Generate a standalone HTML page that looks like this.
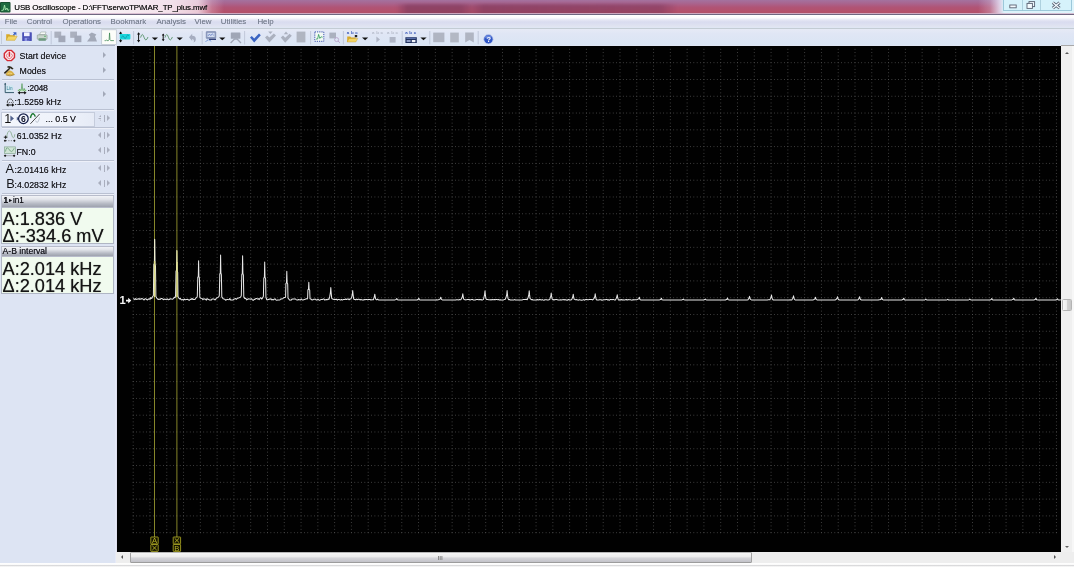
<!DOCTYPE html>
<html><head><meta charset="utf-8"><title>USB Oscilloscope</title>
<style>
html,body{margin:0;padding:0;}
body{width:1074px;height:567px;overflow:hidden;position:relative;background:#dfe6f4;font-family:"Liberation Sans",sans-serif;color:#222;}
.abs{position:absolute;}
#title{left:0;top:0;width:1074px;height:14.800px;background:linear-gradient(to bottom,#a4729f 0%,#a9658f 22%,#b05476 48%,#b4506a 78%,#aa5069 100%);}
#tglow{left:0;top:0;width:330px;height:14.400px;background:linear-gradient(to right,rgba(250,247,250,1) 0,rgba(249,242,247,.98) 110px,rgba(246,232,240,.95) 170px,rgba(244,222,232,.85) 198px,rgba(240,200,215,.3) 212px,rgba(240,200,215,0) 224px);}
#tdark{left:396px;top:4px;width:282px;height:11px;background:linear-gradient(to right,rgba(110,50,86,0),rgba(110,50,86,.5) 4%,rgba(110,50,86,.5) 23%,rgba(110,50,86,.2) 27%,rgba(110,50,86,.5) 31%,rgba(110,50,86,.42) 94%,rgba(110,50,86,0));filter:blur(1.600px);}
#ttext{text-shadow:0 0 .6px rgba(20,20,20,.8);left:14.3px;top:3.1px;letter-spacing:-.1px;font-size:7.9px;line-height:10px;color:#1a1a1a;white-space:nowrap;}
#tline{left:0;top:12.500px;width:1074px;height:2.600px;background:linear-gradient(to bottom,rgba(214,180,204,0) 0,rgba(214,184,206,.85) 25%,rgba(206,176,200,.9) 45%,#726a84 58%,#6e6680 88%,#b4b0c0 100%);}
#wbtn{left:1003px;top:0;width:69px;height:11.3px;background:#d6f2fb;border:0.6px solid #9cc8da;border-top:none;box-sizing:border-box;}
#menu{left:0;top:15.200px;width:1074px;height:12.300px;background:linear-gradient(to bottom,#ffffff 0,#fcfcfe 22%,#e4e6f4 42%,#d9dcef 58%,#dcdff0 75%,#e1e5f1 100%);}
.mi{text-shadow:0 0 .6px rgba(114,122,138,.45);position:absolute;top:16.6px;font-size:7.9px;line-height:10px;color:#727a8a;white-space:nowrap;}
#tool{left:0;top:27.5px;width:1074px;height:17.6px;background:linear-gradient(to bottom,#e6eaf6 0,#e0e6f5 30%,#dae5f4 100%);border-top:0.8px solid #c3ccd4;box-sizing:border-box;}
#panel{left:0;top:45.1px;width:116.2px;height:522px;background:#dde4f3;}
.sep{position:absolute;left:1.5px;width:112px;height:0.8px;background:#bac1d2;box-shadow:0 .8px 0 #f0f3fa;}
.pt{text-shadow:0 0 .6px rgba(20,20,30,.75);position:absolute;font-size:8.8px;line-height:10px;white-space:nowrap;color:#1e1e22;}
.big{text-shadow:0 0 .8px rgba(20,20,20,.7);position:absolute;font-size:18.2px;line-height:18px;white-space:nowrap;color:#151515;left:2.5px;}
.hdr{position:absolute;left:1.2px;width:112.600px;background:linear-gradient(to bottom,#f2f3f7 0,#e2e4ea 30%,#b6bac4 70%,#9ea2ae 100%);font-size:8.6px;line-height:10px;color:#20222a;box-sizing:border-box;border:0.5px solid #b8bccb;}
.box{position:absolute;left:1.2px;width:112.600px;background:#f1fbef;border:0.6px solid #b0b6c4;border-top:none;box-sizing:border-box;}
.arr{position:absolute;width:0;height:0;border-top:3px solid transparent;border-bottom:3px solid transparent;border-left:3.8px solid #a2a8b8;margin-top:-.4px}
.arl{position:absolute;width:0;height:0;border-top:3px solid transparent;border-bottom:3px solid transparent;border-right:3.8px solid #b4bacb;margin-top:-.4px;margin-left:-.4px}
.ar2{position:absolute;width:0;height:0;border-top:3.800px solid transparent;border-bottom:3.800px solid transparent;border-left:3.900px solid #a9aebd;}
.al2{position:absolute;width:0;height:0;border-top:3.800px solid transparent;border-bottom:3.800px solid transparent;border-right:3.900px solid #a9aebd;}
#scope{left:116.500px;top:45.700px;width:944.300px;height:506px;background:#000;overflow:hidden;}
#vs{left:1060.8px;top:45.300px;width:13.2px;height:506.400px;background:#f0f0f0;border-top:.8px solid #a8a8a8;box-sizing:border-box}
#hs{left:116.4px;top:551.7px;width:957.6px;height:12.2px;background:#eeeeee;}
#bot{left:0;top:563.200px;width:1074px;height:3.800px;background:linear-gradient(to bottom,#ffffff 0,#fafafa 40%,#bcbcc0 46%,#bcbcc0 58%,#f2f2f2 66%,#f4f4f4 100%);}
</style></head><body><div id="wrap" style="position:absolute;left:0;top:0;width:1074px;height:567px;will-change:transform;opacity:.999">
<div id="title" class="abs" style="overflow:hidden"><div id="tdark" class="abs"></div></div>
<div id="tglow" class="abs"></div>
<svg class="abs" style="left:0px;top:1.800px" width="11" height="12" viewBox="0 0 11 12"><rect x="0" y="0" width="10.5" height="10.600" rx="1" fill="#17492c"/><rect x="0.8" y="0.8" width="8.9" height="9" fill="#1f6a40"/><path d="M1.5 8.5 L3.5 8 L4.5 3 L5.5 8 L7 6 L8 8.5 L9.3 7.5" fill="none" stroke="#9fe0a8" stroke-width="1"/></svg>
<div id="ttext" class="abs">USB Oscilloscope - D:\FFT\serwoTP\MAR_TP_plus.mwf</div>
<div class="abs" style="left:960px;top:0;width:114px;height:14.100px;background:linear-gradient(to right,rgba(226,210,232,0) 0,rgba(226,210,232,.0) 18px,rgba(226,210,232,.3) 30px,rgba(228,220,240,.85) 39px,#dcf2fa 44px,#def4fb 100%)"></div><div id="wbtn" class="abs"></div>
<svg class="abs" style="left:1003px;top:0" width="70" height="12" viewBox="0 0 70 12">
<line x1="19.5" y1="0" x2="19.5" y2="11" stroke="#9cc3d3" stroke-width=".7"/><line x1="37.5" y1="0" x2="37.5" y2="11" stroke="#9cc3d3" stroke-width=".7"/>
<rect x="6.8" y="5" width="6.4" height="2.8" fill="#f4fbff" stroke="#5a6272" stroke-width=".9"/>
<rect x="26" y="1.6" width="5.6" height="5" fill="#eef8fc" stroke="#5a6272" stroke-width=".9"/><rect x="24" y="3.4" width="5.4" height="5" fill="#f4fbff" stroke="#5a6272" stroke-width=".9"/>
<path d="M49.800 2.600 L56.600 8.200 M56.600 2.600 L49.800 8.200" stroke="#525a6c" stroke-width="3" fill="none"/><path d="M49.800 2.600 L56.600 8.200 M56.600 2.600 L49.800 8.200" stroke="#f4fbff" stroke-width="1.300" fill="none"/>
</svg>
<div id="tline" class="abs"></div>
<div id="menu" class="abs"></div>
<div class="mi" style="left:4.7px">File</div>
<div class="mi" style="left:26.7px">Control</div>
<div class="mi" style="left:62.4px">Operations</div>
<div class="mi" style="left:110.6px">Bookmark</div>
<div class="mi" style="left:156.6px">Analysis</div>
<div class="mi" style="left:194.6px">View</div>
<div class="mi" style="left:220.8px">Utilities</div>
<div class="mi" style="left:257.4px">Help</div>
<div id="tool" class="abs"></div>
<svg class="abs" style="left:0;top:27.7px" width="500" height="18" viewBox="0 27 500 18">
<!-- grip -->
<line x1="1.4" y1="30" x2="1.4" y2="43" stroke="#b9c0d2" stroke-width=".8"/>
<!-- open -->
<path d="M6.2 33.2 h3.2 l1 1 h4.6 v5 h-8.8z" fill="#d9a928"/><path d="M6.2 39.2 l2-4 h9 l-2.2 4z" fill="#f3d566" stroke="#c39a24" stroke-width=".4"/><path d="M13 31.2 l3.4 0 0 3.2 -1.2-1.1 -1.4 1.3 -.9-.9 1.3-1.3z" fill="#3b62c4"/>
<!-- save -->
<rect x="22.2" y="31.2" width="9.6" height="8.800" rx=".6" fill="#4a50b6"/><rect x="24" y="31.400" width="5.600" height="3.800" fill="#f2f2ff"/><rect x="24.6" y="36.8" width="4.6" height="3.2" fill="#8f97e6"/><rect x="27.4" y="37.3" width="1.2" height="2.3" fill="#2a3496"/>
<!-- print -->
<path d="M39.5 33.6 l1.4-2.6 h5.2 l-1 2.6z" fill="#f8faf8" stroke="#8a9a90" stroke-width=".5"/><rect x="37.3" y="33.8" width="9.8" height="4.6" rx=".8" fill="#c9d4cc" stroke="#76867c" stroke-width=".5"/><rect x="38.6" y="37.2" width="7.2" height="2.6" fill="#6f9a80"/><rect x="44.2" y="34.8" width="1.6" height="1" fill="#49b35e"/>
<line x1="51.2" y1="30" x2="51.2" y2="43.4" stroke="#b9c0d2" stroke-width=".8"/>
<!-- disabled copy icons -->
<g fill="#abb0be"><rect x="54.400" y="30.600" width="6.800" height="6.200"/><rect x="58.400" y="34.600" width="7" height="6.600" fill="#a2a8b8"/>
<rect x="70.200" y="30.600" width="6.800" height="6.200"/><rect x="74.400" y="34.600" width="7" height="6.600" fill="#a2a8b8"/>
<path d="M87 40.4 l3.4-4.4 -1.6-2.6 3-2 4.6 2.2 -1.4 1.6 2 5.2z" fill="#a3a9b8"/></g>
<!-- active fft button -->
<rect x="101.700" y="28.800" width="14.600" height="14.700" fill="#fcfdf9" stroke="#b9c0cc" stroke-width=".7"/><path d="M104.600 39.600 h1.200 l.6-.5 .6.500 h1.400 l.7-.7 .45-7 .45 7 .7.700 h3.200" fill="none" stroke="#3a8650" stroke-width=".75"/>
<!-- cyan icon -->
<path d="M120.600 31.400 v9.200" stroke="#111" stroke-width="1"/><path d="M118.900 32.800 l1.700-2.300 1.700 2.300z M118.900 39.200 l1.700 2.300 1.700-2.300z" fill="#111"/><rect x="119.800" y="32.900" width="10.600" height="5.500" rx=".8" fill="#19d6dc"/><path d="M121.600 36.800 q1.200-3.600 2.400-.6 t2.400-.4 2.400-.8" fill="none" stroke="#0f8fa8" stroke-width=".7"/>
<line x1="133.6" y1="30" x2="133.6" y2="43.4" stroke="#b9c0d2" stroke-width=".8"/>
<!-- vert scale icons -->
<path d="M138.6 32 v8.6" stroke="#111" stroke-width="1"/><path d="M137 33.6 l1.6-2.4 1.6 2.4z M137 39 l1.6 2.4 1.6-2.4z" fill="#111"/><path d="M140.6 36.6 q1.6-6 3.4-.4 t4 -.2" fill="none" stroke="#4a8a5c" stroke-width=".8"/>
<path d="M151.8 36.4 h6.2 l-3.1 2.9z" fill="#111"/>
<path d="M163.2 33.4 v6" stroke="#111" stroke-width="1"/><path d="M161.8 34.6 l1.4-2 1.4 2z M161.8 38.2 l1.4 2 1.4-2z" fill="#111"/><path d="M165 36.6 q1.6-6 3.4-.4 t4 -.2" fill="none" stroke="#4a8a5c" stroke-width=".8"/>
<path d="M176.6 36.4 h6.2 l-3.1 2.9z" fill="#111"/>
<!-- undo -->
<path d="M189 36.2 l3.2-3.4 v2 q4 0 3.6 4.2 q-.4 2-2.4 2.6 q1.6-2.6-1.2-3.6 v2z" fill="#a6adc0"/>
<line x1="202.2" y1="30" x2="202.2" y2="43.4" stroke="#b9c0d2" stroke-width=".8"/>
<!-- monitor -->
<rect x="206.200" y="30.600" width="9.600" height="6.800" rx=".5" fill="#8a98bc" stroke="#6a7aa4" stroke-width=".5"/><rect x="207.400" y="31.800" width="7.200" height="4.200" fill="#d2dcf0"/><path d="M208 35 l1.400-2 1.400 1.600 1.400-1.800 1.600 1.600" fill="none" stroke="#4a66b8" stroke-width=".6"/><rect x="209" y="37.800" width="7" height="1.100" fill="#22306c"/><path d="M205.600 40.800 q2.600-3.400 5.600-.4" fill="none" stroke="#4a78d0" stroke-width="1" stroke-dasharray="1.100 .7"/>
<path d="M219.2 36.4 h6.2 l-3.1 2.9z" fill="#111"/>
<rect x="230.8" y="31.4" width="9.6" height="6.4" rx=".6" fill="#a0a6b6"/><path d="M230.6 42 l4-4 h2.4 l4 4" fill="none" stroke="#a0a6b6" stroke-width="1.3"/>
<line x1="244.6" y1="30" x2="244.6" y2="43.4" stroke="#b9c0d2" stroke-width=".8"/>
<!-- checks -->
<path d="M250 36.6 l1.8-1.6 2.4 2.6 4.8-5 1.8 1.6 -6.6 7.4z" fill="#3a63c2"/>
<path d="M265 36.400 l2.200-2 2.200 2.200 4.400-4 2.200 2 -6.600 7z" fill="#abb1bf"/><path d="M268.200 30.600 h4.400 l-2.200 2.400z" fill="#abb1bf"/>
<path d="M280.800 36.600 l2.200-2 2.200 2.200 4.400-4 2.200 2 -6.600 7z" fill="#abb1bf"/><path d="M283.800 33.200 l2.200-2.600 2.200 2.600z" fill="#abb1bf"/>
<rect x="296.600" y="30.600" width="8.800" height="10.800" fill="#b0b5c1"/>
<line x1="310.6" y1="30" x2="310.6" y2="43.4" stroke="#b9c0d2" stroke-width=".8"/>
<!-- select -->
<rect x="314.800" y="30.900" width="9" height="9.400" fill="#f2f8f4" stroke="#2c44a8" stroke-width=".9" stroke-dasharray="1.200 1"/><path d="M316 38 h1.600 l1-4.600 1.200 4 1.200-1.600 1.600 .4" fill="none" stroke="#2f9a58" stroke-width=".8"/>
<rect x="329.4" y="31.6" width="6.6" height="5.8" fill="#abb1bf"/><circle cx="336.6" cy="38.6" r="2" fill="none" stroke="#b9a6cc" stroke-width=".9"/><path d="M338 40 l2 1.8" stroke="#b9a6cc" stroke-width="1"/>
<!-- folder abc -->
<line x1="343.400" y1="30" x2="343.400" y2="43.400" stroke="#b9c0d2" stroke-width=".8"/>
<path d="M347.200 35.600 h3 l1 1 h4.400 v4.400 h-8.400z" fill="#d9a928"/><path d="M347.200 41 l1.800-3.600 h8.800 l-2 3.600z" fill="#f3d566" stroke="#c39a24" stroke-width=".4"/><text x="346.800" y="33.200" font-size="4.400" font-family="Liberation Sans, sans-serif" font-weight="bold" fill="#3555b8" letter-spacing="1.700">abc</text><rect x="354.800" y="34" width="2.400" height="2.200" fill="#222"/>
<path d="M362 36.4 h6.2 l-3.1 2.9z" fill="#111"/>
<text x="372" y="33.200" font-size="4.400" font-family="Liberation Sans, sans-serif" font-weight="bold" fill="#b4bac8" letter-spacing="1.700">abc</text><path d="M376.4 35.6 v6 l3.6-3z" fill="#b0b6c6"/>
<text x="387" y="33.200" font-size="4.400" font-family="Liberation Sans, sans-serif" font-weight="bold" fill="#b4bac8" letter-spacing="1.700">abc</text><rect x="389.6" y="36" width="6" height="5.6" fill="#b0b6c6"/>
<line x1="402.2" y1="30" x2="402.2" y2="43.4" stroke="#b9c0d2" stroke-width=".8"/>
<text x="405.200" y="33.400" font-size="4.400" font-family="Liberation Sans, sans-serif" font-weight="bold" fill="#3555b8" letter-spacing="1.700">abc</text><rect x="405.4" y="36.2" width="11.4" height="5.8" fill="#1f2f5c"/><rect x="406.4" y="36.8" width="9.4" height=".9" fill="#6f86c8"/><rect x="411.8" y="39" width="3.6" height="2.2" fill="#f2f4fa"/><rect x="406.6" y="39" width="4" height="2" fill="#8f9cc4"/>
<path d="M420.4 36.4 h6.2 l-3.1 2.9z" fill="#111"/>
<line x1="429.8" y1="30" x2="429.8" y2="43.4" stroke="#b9c0d2" stroke-width=".8"/>
<rect x="433.2" y="31.6" width="11.2" height="9.6" fill="#b0b5c2"/><rect x="450.2" y="31.6" width="8.6" height="9.8" fill="#b3b8c4"/><path d="M465.2 31.6 h8.6 v10 l-4.3-2.6 -4.3 2.6z" fill="#b0b5c2"/>
<line x1="478.2" y1="30" x2="478.2" y2="43.4" stroke="#b9c0d2" stroke-width=".8"/>
<!-- help -->
<circle cx="488.4" cy="38.2" r="4.7" fill="#2f55c6" stroke="#c9d3ee" stroke-width=".8"/><ellipse cx="488.2" cy="36" rx="3.2" ry="1.8" fill="#7f9be6" opacity=".7"/><text x="486.4" y="41" font-size="7.4" font-weight="bold" font-family="Liberation Sans, sans-serif" fill="#fff">?</text>
</svg>
<div id="panel" class="abs"></div><div class="abs" style="left:0;top:44.500px;width:116.300px;height:.8px;background:#aab2c4"></div>
<svg class="abs" style="left:3.300px;top:48.800px" width="13.200" height="13.200" viewBox="0 0 14 14"><path d="M4.600 1.500 h4.400 l3.200 3.200 v4.400 l-3.200 3.200 h-4.400 l-3.200-3.200 v-4.400z" fill="#fbe9ec" stroke="#d42a34" stroke-width="1.500" stroke-linejoin="round"/><path d="M4.900 4.800 a3 3 0 1 0 3.800 0" fill="none" stroke="#e0606a" stroke-width=".9"/><rect x="6" y="2.800" width="1.600" height="5.400" fill="#d42a34"/></svg>
<div class="pt" style="left:19.6px;top:50.65px;">Start device</div>
<div class="arr" style="left:102.6px;top:52.6px"></div>
<svg class="abs" style="left:3px;top:64px" width="14" height="13" viewBox="0 0 14 13"><path d="M2.600 10.400 q.6-3 3.600-4.200 q3.400.4 5.400 4.200 q-4.400 2.600-9 0z" fill="#d8b048"/><path d="M4.400 10 q2.400-1.600 4.600-.4" fill="none" stroke="#f4dc84" stroke-width=".8"/><path d="M1.400 9.400 l5.400-5.200" stroke="#2a2418" stroke-width="1.500"/><path d="M4.200 2.400 q3.600-1.200 6.400 2.400 l-1.400.8 q-2.200-2.400-4.600-1.800z" fill="#2e2a1c"/><path d="M2.800 11 q4.400 2 8.800-.4" fill="none" stroke="#8a6a20" stroke-width=".6"/></svg>
<div class="pt" style="left:19.6px;top:65.95px;">Modes</div>
<div class="arr" style="left:102.6px;top:67.6px"></div>
<div class="sep" style="top:79px"></div>
<svg class="abs" style="left:4px;top:82px" width="24" height="13" viewBox="0 0 24 13"><rect x="1.600" y="3" width="7.600" height="7.200" fill="#d4e8f2"/><path d="M1.200 1.400 v9.200 h8.800" fill="none" stroke="#234a5c" stroke-width=".9"/><path d="M.2 2.600 l1-1.800 1 1.800z" fill="#234a5c"/><text x="2.400" y="8.400" font-size="4.600" fill="#2f7f96" font-family="Liberation Sans, sans-serif">Lin</text><rect x="14" y="7.400" width="8.400" height="2" fill="#c9efc4"/><path d="M13.800 8.400 h1.400 l.6-1.400 .6 1.400 h.8 l.8-6.800 .8 6.800 h.8 l.6-2 .6 2 h1.400" fill="none" stroke="#5fa266" stroke-width=".8"/><path d="M15 10.700 h6.200" stroke="#111" stroke-width="1"/><path d="M13.600 10.700 l2.400-1.700 v3.400z M22.600 10.700 l-2.400-1.700 v3.400z" fill="#111"/></svg>
<div class="pt" style="left:27.200px;top:83.15px;letter-spacing:-.3px">:2048</div>
<svg class="abs" style="left:5px;top:96px" width="11" height="11" viewBox="0 0 11 11"><path d="M2.400 5.800 q.6-2.800 2.800-2.800 t2.800 2.800" fill="none" stroke="#1c1c1c" stroke-width=".9" stroke-dasharray="1.600 .6"/><path d="M1.800 6.600 h7" stroke="#333" stroke-width=".7" stroke-dasharray="1.200 .8"/><path d="M2.400 9 h5.600" stroke="#111" stroke-width="1"/><path d="M1 9 l2.400-1.700 v3.400z M9.400 9 l-2.400-1.700 v3.400z" fill="#111"/></svg>
<div class="pt" style="left:14.4px;top:96.65px;">:1.5259 kHz</div>
<div class="arr" style="left:102.6px;top:91.2px"></div>
<div class="sep" style="top:109.4px"></div>
<div class="abs" style="left:1.2px;top:111.900px;width:94px;height:14.700px;background:linear-gradient(to right,#f3f6fc 0,#eef2fa 70%,#e6ebf6 100%);border:0.6px solid #c5ccdc;box-sizing:border-box"></div>
<div class="abs" style="left:4.300px;top:112.600px;font-size:12.600px;line-height:12px;color:#111">1</div>
<svg class="abs" style="left:10px;top:112px" width="32" height="13" viewBox="0 0 32 13"><path d="M.400 3.600 l3.600 3 -3.600 3z" fill="#51618c"/><path d="M6.800 4.800 l2.600 1.900 -2.600 1.900z" fill="#51618c"/><circle cx="13.400" cy="6.700" r="4.800" fill="#f4f7ff" stroke="#141e48" stroke-width="1.250"/><text x="11" y="9.800" font-size="8.600" font-weight="bold" fill="#0c1024" font-family="Liberation Sans, sans-serif">6</text><path d="M20.400 6 q1.200-5.200 3.200-4 q1.200.8 1.600 2.600" fill="none" stroke="#1f7a34" stroke-width="1.500"/><path d="M20.400 11.800 l9.200-9.800" stroke="#222" stroke-width=".8"/><path d="M25.600 8.600 q1.400 3.600 2.800 .4 t1-3.600" fill="none" stroke="#aab4c0" stroke-width=".7"/></svg>
<div class="pt" style="left:45.6px;top:113.85px;">... 0.5 V</div>
<div class="al2" style="left:98.200px;top:114.800px"></div><div class="abs" style="left:97.600px;top:116.800px;width:5px;height:.7px;background:#e0e6f4;box-shadow:0 2.200px 0 #e0e6f4"></div>
<div class="abs" style="left:103.800px;top:114.5px;width:.9px;height:7.400px;background:#a9aebd"></div><div class="ar2" style="left:106.500px;top:114.800px"></div>
<div class="sep" style="top:127.3px"></div>
<svg class="abs" style="left:3px;top:130px" width="14" height="13" viewBox="0 0 14 13"><path d="M3.600 7.800 q.8-6.800 2.800-6.800 q1.600 0 2.400 4 q.6 2.800 1.600 2.800 q1 0 1.400-3.600" fill="none" stroke="#8fb096" stroke-width=".9"/><path d="M.8 7.200 h3.600 M2.600 5.600 v3.200" stroke="#111" stroke-width=".9"/><path d="M3 10.700 h7.600" stroke="#555" stroke-width=".8" stroke-dasharray="1 1.400"/><path d="M.8 10.700 l1.200-1.200 1.200 1.200 -1.200 1.200z M10.200 10.700 l1.200-1.200 1.200 1.200 -1.200 1.200z" fill="#111"/></svg>
<div class="pt" style="left:16.8px;top:131.25px;">61.0352 Hz</div>
<div class="al2" style="left:98.200px;top:131.8px"></div><div class="abs" style="left:103.800px;top:131.5px;width:.9px;height:7.400px;background:#a9aebd"></div><div class="ar2" style="left:106.500px;top:131.8px"></div>
<svg class="abs" style="left:3px;top:145.6px" width="14" height="13" viewBox="0 0 14 13"><rect x="1.400" y=".9" width="11" height="6.600" fill="#cfe4d6" stroke="#86a894" stroke-width=".7"/><path d="M2.400 5.600 q1.200-5.800 3.200-2.800 t3 2.800 2.600-3.400" fill="none" stroke="#76a684" stroke-width=".9"/><path d="M3 9.700 h8" stroke="#777" stroke-width=".5"/><path d="M.8 9.700 l1.300-1.300 1.300 1.300 -1.300 1.300z M9.800 9.700 l1.300-1.300 1.300 1.300 -1.300 1.300z" fill="#111"/></svg>
<div class="pt" style="left:16.5px;top:146.65px;">FN:0</div>
<div class="al2" style="left:98.200px;top:147.4px"></div><div class="abs" style="left:103.800px;top:147.1px;width:.9px;height:7.400px;background:#a9aebd"></div><div class="ar2" style="left:106.500px;top:147.4px"></div>
<div class="sep" style="top:160.2px"></div>
<div class="abs" style="left:5.4px;top:162.70px;font-size:12.8px;line-height:12px;color:#15161a">A</div>
<div class="pt" style="left:14.5px;top:165.05px;">:2.01416 kHz</div>
<div class="al2" style="left:98.200px;top:164.8px"></div><div class="abs" style="left:103.800px;top:164.5px;width:.9px;height:7.400px;background:#a9aebd"></div><div class="ar2" style="left:106.500px;top:164.8px"></div>
<div class="abs" style="left:6.2px;top:177.90px;font-size:12.8px;line-height:12px;color:#15161a">B</div>
<div class="pt" style="left:14.5px;top:180.25px;">:4.02832 kHz</div>
<div class="al2" style="left:98.200px;top:180.0px"></div><div class="abs" style="left:103.800px;top:179.7px;width:.9px;height:7.400px;background:#a9aebd"></div><div class="ar2" style="left:106.500px;top:180.0px"></div>
<div class="sep" style="top:193.2px"></div>
<div class="hdr" style="top:195.4px;height:12.2px"></div>
<div class="pt" style="left:3.400px;top:196.30px;font-size:8.2px;color:#15161c"><b>1</b><span style="font-size:5px;position:relative;top:-1px">&#9658;</span>in1</div>
<div class="box" style="top:207.6px;height:36.8px"></div>
<div class="big" style="top:210.00px">A:1.836 V</div>
<div class="big" style="top:226.80px">&Delta;:-334.6 mV</div>
<div class="hdr" style="top:245.8px;height:10.9px"></div>
<div class="pt" style="left:2.6px;top:245.75px;font-size:8.6px;color:#15161c">A-B interval</div>
<div class="box" style="top:256.7px;height:37px"></div>
<div class="big" style="top:259.80px">A:2.014 kHz</div>
<div class="big" style="top:276.70px">&Delta;:2.014 kHz</div>
<div class="abs" style="left:114.500px;top:45.100px;width:2px;height:518.100px;background:linear-gradient(to right,#dfe5f4 0,#eaecf9 40%,#e6e8f7 70%,#b4bbcc 100%)"></div>
<div id="scope" class="abs">
<svg width="945" height="507" viewBox="0 0 945 507" style="position:absolute;left:-0.500px;top:-0.700px">
<g stroke="#585858" stroke-width="0.84" stroke-dasharray="0.840 2.517" fill="none">
<line x1="16.78" y1="17.69" x2="940.93" y2="17.69"/>
<line x1="16.78" y1="34.47" x2="940.93" y2="34.47"/>
<line x1="16.78" y1="51.26" x2="940.93" y2="51.26"/>
<line x1="16.78" y1="68.04" x2="940.93" y2="68.04"/>
<line x1="16.78" y1="84.83" x2="940.93" y2="84.83"/>
<line x1="16.78" y1="101.62" x2="940.93" y2="101.62"/>
<line x1="16.78" y1="118.40" x2="940.93" y2="118.40"/>
<line x1="16.78" y1="135.19" x2="940.93" y2="135.19"/>
<line x1="16.78" y1="151.97" x2="940.93" y2="151.97"/>
<line x1="16.78" y1="168.76" x2="940.93" y2="168.76"/>
<line x1="16.78" y1="185.55" x2="940.93" y2="185.55"/>
<line x1="16.78" y1="202.33" x2="940.93" y2="202.33"/>
<line x1="16.78" y1="219.12" x2="940.93" y2="219.12"/>
<line x1="16.78" y1="235.90" x2="940.93" y2="235.90"/>
<line x1="16.78" y1="252.69" x2="940.93" y2="252.69"/>
<line x1="16.78" y1="269.48" x2="940.93" y2="269.48"/>
<line x1="16.78" y1="286.26" x2="940.93" y2="286.26"/>
<line x1="16.78" y1="303.05" x2="940.93" y2="303.05"/>
<line x1="16.78" y1="319.83" x2="940.93" y2="319.83"/>
<line x1="16.78" y1="336.62" x2="940.93" y2="336.62"/>
<line x1="16.78" y1="353.41" x2="940.93" y2="353.41"/>
<line x1="16.78" y1="370.19" x2="940.93" y2="370.19"/>
<line x1="16.78" y1="386.98" x2="940.93" y2="386.98"/>
<line x1="16.78" y1="403.76" x2="940.93" y2="403.76"/>
<line x1="16.78" y1="420.55" x2="940.93" y2="420.55"/>
<line x1="16.78" y1="437.34" x2="940.93" y2="437.34"/>
<line x1="16.78" y1="454.12" x2="940.93" y2="454.12"/>
<line x1="16.78" y1="470.91" x2="940.93" y2="470.91"/>
<line x1="16.78" y1="487.69" x2="940.93" y2="487.69"/>
<line x1="17.20" y1="3.84" x2="17.20" y2="488.19"/>
<line x1="33.99" y1="3.84" x2="33.99" y2="488.19"/>
<line x1="50.77" y1="3.84" x2="50.77" y2="488.19"/>
<line x1="67.56" y1="3.84" x2="67.56" y2="488.19"/>
<line x1="84.34" y1="3.84" x2="84.34" y2="488.19"/>
<line x1="101.13" y1="3.84" x2="101.13" y2="488.19"/>
<line x1="117.92" y1="3.84" x2="117.92" y2="488.19"/>
<line x1="134.70" y1="3.84" x2="134.70" y2="488.19"/>
<line x1="151.49" y1="3.84" x2="151.49" y2="488.19"/>
<line x1="168.27" y1="3.84" x2="168.27" y2="488.19"/>
<line x1="185.06" y1="3.84" x2="185.06" y2="488.19"/>
<line x1="201.85" y1="3.84" x2="201.85" y2="488.19"/>
<line x1="218.63" y1="3.84" x2="218.63" y2="488.19"/>
<line x1="235.42" y1="3.84" x2="235.42" y2="488.19"/>
<line x1="252.20" y1="3.84" x2="252.20" y2="488.19"/>
<line x1="268.99" y1="3.84" x2="268.99" y2="488.19"/>
<line x1="285.78" y1="3.84" x2="285.78" y2="488.19"/>
<line x1="302.56" y1="3.84" x2="302.56" y2="488.19"/>
<line x1="319.35" y1="3.84" x2="319.35" y2="488.19"/>
<line x1="336.13" y1="3.84" x2="336.13" y2="488.19"/>
<line x1="352.92" y1="3.84" x2="352.92" y2="488.19"/>
<line x1="369.71" y1="3.84" x2="369.71" y2="488.19"/>
<line x1="386.49" y1="3.84" x2="386.49" y2="488.19"/>
<line x1="403.28" y1="3.84" x2="403.28" y2="488.19"/>
<line x1="420.06" y1="3.84" x2="420.06" y2="488.19"/>
<line x1="436.85" y1="3.84" x2="436.85" y2="488.19"/>
<line x1="453.64" y1="3.84" x2="453.64" y2="488.19"/>
<line x1="470.42" y1="3.84" x2="470.42" y2="488.19"/>
<line x1="487.21" y1="3.84" x2="487.21" y2="488.19"/>
<line x1="503.99" y1="3.84" x2="503.99" y2="488.19"/>
<line x1="520.78" y1="3.84" x2="520.78" y2="488.19"/>
<line x1="537.57" y1="3.84" x2="537.57" y2="488.19"/>
<line x1="554.35" y1="3.84" x2="554.35" y2="488.19"/>
<line x1="571.14" y1="3.84" x2="571.14" y2="488.19"/>
<line x1="587.92" y1="3.84" x2="587.92" y2="488.19"/>
<line x1="604.71" y1="3.84" x2="604.71" y2="488.19"/>
<line x1="621.50" y1="3.84" x2="621.50" y2="488.19"/>
<line x1="638.28" y1="3.84" x2="638.28" y2="488.19"/>
<line x1="655.07" y1="3.84" x2="655.07" y2="488.19"/>
<line x1="671.85" y1="3.84" x2="671.85" y2="488.19"/>
<line x1="688.64" y1="3.84" x2="688.64" y2="488.19"/>
<line x1="705.43" y1="3.84" x2="705.43" y2="488.19"/>
<line x1="722.21" y1="3.84" x2="722.21" y2="488.19"/>
<line x1="739.00" y1="3.84" x2="739.00" y2="488.19"/>
<line x1="755.78" y1="3.84" x2="755.78" y2="488.19"/>
<line x1="772.57" y1="3.84" x2="772.57" y2="488.19"/>
<line x1="789.36" y1="3.84" x2="789.36" y2="488.19"/>
<line x1="806.14" y1="3.84" x2="806.14" y2="488.19"/>
<line x1="822.93" y1="3.84" x2="822.93" y2="488.19"/>
<line x1="839.71" y1="3.84" x2="839.71" y2="488.19"/>
<line x1="856.50" y1="3.84" x2="856.50" y2="488.19"/>
<line x1="873.29" y1="3.84" x2="873.29" y2="488.19"/>
<line x1="890.07" y1="3.84" x2="890.07" y2="488.19"/>
<line x1="906.86" y1="3.84" x2="906.86" y2="488.19"/>
<line x1="923.64" y1="3.84" x2="923.64" y2="488.19"/>
<line x1="940.43" y1="3.84" x2="940.43" y2="488.19"/>
</g>
<line x1="38.5" y1="0" x2="38.5" y2="492.0" stroke="#86862a" stroke-width="1"/>
<line x1="60.9" y1="0" x2="60.9" y2="492.0" stroke="#86862a" stroke-width="1"/>
<polyline points="17.2,254.1 18.0,253.8 18.9,254.7 19.7,253.6 20.6,254.5 21.4,254.2 22.2,253.6 23.1,254.4 23.9,253.6 24.8,254.3 25.6,253.6 26.4,253.7 27.3,254.3 28.1,255.0 29.0,253.7 29.8,253.8 30.6,254.5 31.5,255.0 32.3,254.2 33.2,253.7 34.0,254.5 34.8,252.5 35.7,253.5 36.5,251.8 37.4,250.5 37.4,249.8 37.8,219.7 38.4,218.5 38.7,194.2 39.0,218.5 39.5,221.0 39.9,251.6 40.7,253.0 41.6,254.1 42.4,254.4 43.2,254.1 44.1,254.5 44.9,253.6 45.8,253.6 46.6,253.9 47.4,254.7 48.3,254.3 49.1,254.1 50.0,254.6 50.8,254.3 51.6,254.0 52.5,254.8 53.3,254.6 54.2,253.7 55.0,254.1 55.8,253.9 56.7,254.2 57.5,253.6 58.4,252.2 59.2,252.6 59.6,250.1 60.0,226.3 60.5,225.3 60.8,205.5 61.1,225.3 61.7,227.3 62.0,251.6 62.6,252.8 63.4,253.9 64.2,253.3 65.1,254.6 65.9,254.9 66.8,254.5 67.6,255.1 68.4,254.1 69.3,254.8 70.1,254.6 71.0,254.5 71.8,254.3 72.6,255.0 73.5,255.2 74.3,254.3 75.2,254.5 76.0,253.4 76.8,254.4 77.7,254.2 78.5,254.6 79.4,254.0 80.2,252.6 81.0,252.1 81.3,251.1 81.8,232.3 82.3,231.5 82.6,215.8 82.9,231.5 83.4,233.0 83.8,252.3 84.4,253.1 85.2,253.3 86.1,253.4 86.9,254.8 87.8,253.7 88.6,253.9 89.4,254.2 90.3,255.1 91.1,253.6 92.0,254.3 92.8,254.5 93.6,255.1 94.5,255.0 95.3,255.1 96.2,253.9 97.0,254.1 97.8,253.9 98.7,254.8 99.5,254.7 100.4,253.1 101.2,252.8 102.0,252.4 102.9,251.7 103.3,250.5 103.8,228.9 104.3,228.0 104.6,210.0 104.9,228.0 105.4,229.8 105.8,251.9 107.1,253.8 107.9,253.9 108.8,254.4 109.6,255.2 110.4,254.7 111.3,254.4 112.1,254.6 113.0,254.7 113.8,253.6 114.6,255.1 115.5,254.9 116.3,255.1 117.2,254.9 118.0,254.1 118.8,254.1 119.7,253.5 120.5,254.3 121.4,253.2 122.2,253.0 123.0,252.9 123.9,252.4 124.7,252.0 125.3,250.6 125.8,229.4 126.3,228.5 126.6,210.8 126.9,228.5 127.4,230.2 127.8,251.9 128.9,253.6 129.8,253.3 130.6,254.9 131.4,254.5 132.3,253.8 133.1,254.0 134.0,254.1 134.8,254.2 135.6,253.7 136.5,255.0 137.3,255.3 138.2,254.3 139.0,254.4 139.8,253.6 140.7,253.6 141.5,254.0 142.4,253.7 143.2,254.6 144.0,253.3 144.9,252.8 145.7,254.1 146.6,252.9 147.4,251.2 147.8,233.0 148.4,232.2 148.7,217.0 149.0,232.2 149.6,233.7 149.9,252.3 150.8,254.7 151.6,254.8 152.4,254.6 153.3,253.9 154.1,254.2 155.0,253.8 155.8,254.9 156.6,254.5 157.5,254.9 158.3,254.1 159.2,253.9 160.0,255.0 160.8,255.3 161.7,255.0 162.5,254.9 163.4,254.9 164.2,254.7 165.0,253.7 165.9,254.1 166.7,253.6 167.6,252.8 168.4,252.5 169.2,252.4 169.6,252.1 169.9,238.4 170.5,237.8 170.8,226.3 171.1,237.8 171.7,238.9 172.0,253.0 172.6,253.8 173.4,254.9 174.3,255.1 175.1,255.2 176.0,254.2 176.8,253.9 177.6,253.9 178.5,253.9 179.3,253.9 180.2,254.6 181.0,255.1 181.8,255.0 182.7,254.4 183.5,254.7 184.4,254.9 185.2,254.0 186.0,254.7 186.9,255.0 187.7,254.7 188.6,254.6 189.4,254.2 190.2,253.6 191.1,254.1 191.6,253.2 191.9,244.7 192.5,244.3 192.8,237.2 193.1,244.3 193.7,245.0 194.0,253.8 195.3,254.3 196.1,255.0 197.0,254.8 197.8,254.2 198.6,254.2 199.5,254.2 200.3,255.1 201.2,255.0 202.0,254.2 202.8,255.0 203.7,255.2 204.5,254.8 205.4,254.4 206.2,254.6 207.0,254.1 207.9,254.0 208.7,255.1 209.6,254.7 210.4,254.4 211.2,254.8 212.1,254.1 212.9,254.5 213.8,251.2 214.4,247.5 214.8,242.5 215.2,248.1 215.7,253.1 216.3,254.0 217.1,254.1 218.0,254.6 218.8,254.3 219.6,254.5 220.5,254.2 221.3,255.1 222.2,254.4 223.0,254.5 223.8,254.7 224.7,255.1 225.5,254.5 226.4,255.1 227.2,254.6 228.0,254.6 228.9,254.6 229.7,254.0 230.6,254.5 231.4,254.1 232.2,253.9 233.1,254.8 233.9,253.9 234.8,254.1 235.7,252.1 236.3,249.3 236.7,245.5 237.1,249.8 237.6,253.6 238.1,254.4 239.0,254.5 239.8,254.9 240.6,254.1 241.5,254.7 242.3,254.3 243.2,254.3 244.0,254.9 244.8,254.6 245.7,254.7 246.5,254.9 247.4,255.1 248.2,254.5 249.0,254.7 249.9,254.6 250.7,254.6 251.6,254.8 252.4,254.5 253.2,254.6 254.1,254.5 254.9,255.0 255.8,254.7 256.6,254.8 257.4,254.8 257.8,253.3 258.4,251.5 258.8,249.2 259.2,251.8 259.7,254.1 260.8,254.9 261.6,254.1 262.5,254.9 263.3,255.0 264.2,254.9 265.0,254.9 265.8,254.9 266.7,255.1 267.5,255.1 268.4,255.1 269.2,254.9 270.0,255.1 270.9,255.0 271.7,254.9 272.6,255.1 273.4,255.1 274.2,254.9 275.1,255.1 275.9,255.0 276.8,255.0 277.6,255.1 278.4,255.0 279.3,254.8 280.2,254.4 280.8,253.6 281.4,254.7 282.6,254.9 283.5,254.9 284.3,255.1 285.2,254.9 286.0,255.0 286.8,255.0 287.7,254.9 288.5,254.9 289.4,255.0 290.2,255.0 291.0,254.9 291.9,255.1 292.7,255.1 293.6,255.1 294.4,254.9 295.2,254.9 296.1,254.9 296.9,255.1 297.8,254.9 298.6,254.9 299.4,254.9 300.3,255.1 301.1,255.0 302.2,254.3 302.8,253.3 303.4,254.7 304.5,255.0 305.3,255.0 306.2,254.9 307.0,254.9 307.8,255.1 308.7,255.0 309.5,254.9 310.4,255.1 311.2,255.0 312.0,255.1 312.9,254.9 313.7,255.1 314.6,254.9 315.4,255.1 316.2,255.0 317.1,254.9 317.9,255.0 318.8,255.1 319.6,254.9 320.4,254.8 321.3,254.9 322.1,254.8 323.0,254.7 324.2,253.9 324.8,252.2 325.4,254.4 326.3,254.9 327.2,254.9 328.0,255.1 328.8,254.9 329.7,255.0 330.5,254.9 331.4,255.0 332.2,254.9 333.0,254.9 333.9,254.9 334.7,255.1 335.6,255.0 336.4,254.9 337.2,255.0 338.1,255.1 338.9,254.9 339.8,255.1 340.6,254.8 341.4,254.8 342.3,255.0 343.1,254.6 344.0,254.7 344.8,254.7 345.8,253.1 346.4,251.3 346.8,248.8 347.2,251.6 347.7,254.1 349.0,254.9 349.8,254.7 350.7,254.7 351.5,254.5 352.4,254.6 353.2,254.5 354.0,255.0 354.9,254.7 355.7,254.6 356.6,254.5 357.4,255.1 358.2,255.1 359.1,255.0 359.9,254.7 360.8,254.6 361.6,254.6 362.4,254.8 363.3,254.5 364.1,254.7 365.0,254.5 365.8,255.0 366.6,254.9 367.5,254.4 368.0,252.2 368.6,249.5 369.0,245.8 369.4,249.9 369.9,253.6 370.8,254.6 371.7,254.4 372.5,254.7 373.4,254.8 374.2,254.9 375.0,254.6 375.9,254.9 376.7,254.5 377.6,254.7 378.4,254.5 379.2,254.8 380.1,254.5 380.9,254.5 381.8,254.7 382.6,254.6 383.4,254.9 384.3,254.8 385.1,255.0 386.0,254.9 386.8,254.9 387.6,254.9 388.5,254.4 389.3,254.2 390.1,252.1 390.8,249.3 391.1,245.5 391.5,249.8 392.0,253.6 392.7,254.7 393.5,254.4 394.4,255.1 395.2,255.1 396.0,254.9 396.9,255.0 397.7,255.1 398.6,254.6 399.4,254.9 400.2,254.9 401.1,255.1 401.9,255.1 402.8,255.1 403.6,254.9 404.4,255.1 405.3,255.0 406.1,255.0 407.0,254.6 407.8,254.4 408.6,254.4 409.5,254.6 410.3,254.3 411.2,254.7 412.2,252.2 412.9,249.5 413.2,245.8 413.6,249.9 414.1,253.6 415.4,254.7 416.2,254.4 417.0,255.1 417.9,255.0 418.7,254.9 419.6,254.9 420.4,255.0 421.2,254.5 422.1,255.0 422.9,254.7 423.8,254.5 424.6,254.7 425.4,255.0 426.3,254.6 427.1,255.0 428.0,255.2 428.8,254.8 429.6,254.7 430.5,254.7 431.3,254.9 432.2,254.9 433.0,254.7 433.8,254.5 434.2,252.9 434.9,250.8 435.2,248.0 435.6,251.1 436.1,253.9 437.2,254.9 438.0,254.6 438.9,254.9 439.7,254.4 440.6,254.5 441.4,254.7 442.2,255.0 443.1,255.0 443.9,255.0 444.8,254.7 445.6,254.9 446.4,254.8 447.3,254.8 448.1,254.5 449.0,255.1 449.8,254.6 450.6,255.2 451.5,255.2 452.3,254.4 453.2,254.7 454.0,255.0 454.8,255.0 455.7,254.5 456.2,253.3 456.9,251.5 457.2,249.2 457.6,251.8 458.1,254.1 459.0,254.5 459.9,254.9 460.7,254.5 461.6,254.9 462.4,255.2 463.2,254.6 464.1,255.1 464.9,254.9 465.8,255.2 466.6,255.0 467.4,254.6 468.3,255.2 469.1,254.8 470.0,254.5 470.8,254.4 471.6,254.8 472.5,254.8 473.3,254.6 474.2,254.5 475.0,254.6 475.8,254.6 476.7,254.9 477.5,254.1 478.2,253.1 478.9,251.2 479.2,248.7 479.6,251.5 480.1,254.1 480.9,255.1 481.7,255.0 482.6,255.1 483.4,254.7 484.2,254.7 485.1,254.8 485.9,255.2 486.8,254.9 487.6,254.7 488.4,254.8 489.3,254.7 490.1,254.5 491.0,254.5 491.8,255.1 492.6,254.7 493.5,255.2 494.3,254.6 495.2,254.6 496.0,254.8 496.8,254.5 497.7,254.6 498.5,255.0 499.4,254.9 500.2,253.4 500.9,251.8 501.2,249.7 501.6,252.1 502.1,254.2 502.7,255.1 503.6,254.8 504.4,255.0 505.2,254.5 506.1,255.0 506.9,254.8 507.8,255.1 508.6,255.0 509.4,254.7 510.3,254.5 511.1,255.2 512.0,254.6 512.8,254.8 513.6,254.7 514.5,254.7 515.3,255.0 516.2,255.2 517.0,254.6 517.8,254.9 518.7,254.7 519.5,254.8 520.4,254.7 521.2,254.5 522.7,253.9 523.3,252.2 523.9,254.4 524.6,254.9 525.4,254.9 526.2,255.1 527.1,255.1 527.9,255.0 528.8,254.9 529.6,254.9 530.4,254.9 531.3,255.0 532.1,254.9 533.0,254.9 533.8,255.0 534.6,255.0 535.5,255.1 536.3,255.0 537.2,255.0 538.0,255.0 538.8,255.0 539.7,255.0 540.5,254.9 541.4,254.9 542.2,254.9 543.0,255.0 543.9,254.8 544.8,254.3 545.4,253.3 546.0,254.7 547.2,254.9 548.1,254.9 548.9,254.9 549.8,255.0 550.6,255.0 551.4,255.1 552.3,255.1 553.1,255.1 554.0,254.9 554.8,254.9 555.6,255.0 556.5,255.1 557.3,255.0 558.2,255.0 559.0,254.9 559.8,255.0 560.7,255.1 561.5,255.1 562.4,255.1 563.2,255.1 564.0,254.9 564.9,254.9 565.7,254.9 566.8,254.6 567.4,254.0 568.0,254.8 569.1,255.0 569.9,255.0 570.8,255.0 571.6,255.0 572.4,255.0 573.3,254.9 574.1,255.1 575.0,254.9 575.8,255.1 576.6,255.0 577.5,255.0 578.3,254.9 579.2,255.0 580.0,255.0 580.8,255.0 581.7,254.9 582.5,254.9 583.4,255.0 584.2,255.0 585.0,255.0 585.9,254.9 586.7,255.0 587.6,254.9 588.8,254.6 589.4,254.0 590.0,254.8 590.9,255.0 591.8,255.1 592.6,255.0 593.4,254.9 594.3,254.9 595.1,255.1 596.0,255.0 596.8,255.0 597.6,254.9 598.5,255.0 599.3,255.0 600.2,255.0 601.0,255.0 601.8,255.0 602.7,255.1 603.5,254.9 604.4,254.9 605.2,255.0 606.0,255.0 606.9,255.0 607.7,254.9 608.6,255.0 609.4,255.0 610.9,254.2 611.5,253.0 612.1,254.6 612.8,254.9 613.6,255.0 614.4,254.9 615.3,254.9 616.1,255.0 617.0,255.0 617.8,255.1 618.6,255.0 619.5,254.9 620.3,254.9 621.2,255.0 622.0,255.0 622.8,255.1 623.7,254.9 624.5,255.0 625.4,254.9 626.2,255.1 627.0,254.9 627.9,254.9 628.7,254.9 629.6,254.9 630.4,255.0 631.2,254.9 632.1,254.8 632.5,253.9 633.1,252.8 633.5,251.3 633.9,253.0 634.4,254.4 635.4,254.9 636.3,255.1 637.1,255.0 638.0,254.9 638.8,255.0 639.6,255.0 640.5,255.0 641.3,255.0 642.2,254.9 643.0,254.9 643.8,255.0 644.7,255.0 645.5,255.1 646.4,254.9 647.2,255.1 648.0,254.9 648.9,254.9 649.7,255.0 650.6,255.0 651.4,254.9 652.2,254.8 653.1,254.8 653.9,254.7 654.5,253.5 655.1,252.0 655.5,250.0 655.9,252.2 656.4,254.2 657.3,255.0 658.1,254.9 659.0,255.0 659.8,255.1 660.6,255.1 661.5,254.9 662.3,254.9 663.2,254.9 664.0,255.1 664.8,255.0 665.7,255.0 666.5,255.1 667.4,255.0 668.2,255.0 669.0,255.1 669.9,255.0 670.7,254.9 671.6,255.0 672.4,254.9 673.2,254.9 674.1,254.8 674.9,254.9 675.8,254.9 676.5,253.7 677.1,252.5 677.5,250.8 677.9,252.7 678.4,254.4 679.1,254.9 680.0,254.9 680.8,255.1 681.6,255.1 682.5,255.0 683.3,255.0 684.2,255.0 685.0,255.0 685.8,255.1 686.7,254.9 687.5,255.1 688.4,255.0 689.2,255.1 690.0,255.1 690.9,255.0 691.7,255.0 692.6,255.0 693.4,255.0 694.2,255.0 695.1,254.9 695.9,254.9 696.8,255.0 697.6,254.8 698.9,253.9 699.5,252.2 700.1,254.4 701.0,254.9 701.8,255.1 702.6,255.1 703.5,255.1 704.3,254.9 705.2,254.9 706.0,254.9 706.8,255.0 707.7,255.0 708.5,255.0 709.4,254.9 710.2,255.0 711.0,255.0 711.9,255.0 712.7,255.0 713.6,255.1 714.4,255.0 715.2,254.9 716.1,255.0 716.9,254.9 717.8,254.9 718.6,254.9 719.4,254.9 720.5,254.0 721.1,253.0 721.5,251.7 721.9,253.2 722.4,254.5 723.6,255.0 724.5,255.0 725.3,255.0 726.2,255.0 727.0,255.1 727.8,255.0 728.7,254.9 729.5,255.1 730.4,255.0 731.2,255.1 732.0,254.9 732.9,255.0 733.7,255.1 734.6,255.1 735.4,255.1 736.2,254.9 737.1,254.9 737.9,254.9 738.8,254.9 739.6,255.0 740.4,254.9 741.3,255.0 742.1,254.8 742.6,254.0 743.2,253.0 743.6,251.7 744.0,253.2 744.5,254.5 745.5,255.0 746.3,255.1 747.2,254.9 748.0,255.0 748.8,255.0 749.7,254.9 750.5,255.0 751.4,254.9 752.2,254.9 753.0,255.0 753.9,255.0 754.7,255.0 755.6,254.9 756.4,254.9 757.2,255.0 758.1,255.0 758.9,254.9 759.8,254.9 760.6,254.9 761.4,255.0 762.3,255.0 763.1,254.8 764.0,254.8 765.1,254.0 765.7,252.5 766.3,254.5 767.3,254.9 768.2,254.9 769.0,255.0 769.8,255.0 770.7,255.0 771.5,255.0 772.4,255.1 773.2,255.0 774.0,255.0 774.9,255.0 775.7,255.0 776.6,255.1 777.4,255.1 778.2,255.0 779.1,254.9 779.9,255.0 780.8,254.9 781.6,254.9 782.4,255.1 783.3,255.0 784.1,255.0 785.0,254.9 785.8,255.0 787.2,254.3 787.8,253.3 788.4,254.7 789.2,255.0 790.0,255.0 790.8,255.1 791.7,254.9 792.5,255.0 793.4,255.0 794.2,255.0 795.0,254.9 795.9,255.0 796.7,255.0 797.6,255.1 798.4,254.9 799.2,255.0 800.1,255.1 800.9,255.1 801.8,254.9 802.6,254.9 803.4,255.1 804.3,255.1 805.1,255.0 806.0,254.9 806.8,255.1 807.6,254.9 808.5,255.0 809.2,254.6 809.8,254.0 810.4,254.8 811.0,254.9 811.8,255.0 812.7,254.9 813.5,255.0 814.4,255.1 815.2,255.1 816.0,254.9 816.9,254.9 817.7,255.0 818.6,255.0 819.4,255.0 820.2,254.9 821.1,254.9 821.9,255.0 822.8,255.1 823.6,254.9 824.4,255.0 825.3,255.0 826.1,254.9 827.0,255.1 827.8,254.9 828.6,255.0 829.5,255.0 830.3,255.0 831.2,254.7 831.8,254.3 832.4,254.9 833.7,255.0 834.5,255.0 835.4,255.0 836.2,255.0 837.0,254.9 837.9,255.0 838.7,255.0 839.6,254.9 840.4,255.1 841.2,255.1 842.1,255.0 842.9,254.9 843.8,255.0 844.6,254.9 845.4,254.9 846.3,255.0 847.1,254.9 848.0,255.0 848.8,255.0 849.6,254.9 850.5,255.0 851.3,254.9 852.2,255.0 853.2,254.6 853.8,254.0 854.4,254.8 855.5,255.0 856.4,255.0 857.2,255.1 858.0,254.9 858.9,255.1 859.7,255.1 860.6,255.0 861.4,255.1 862.2,254.9 863.1,255.1 863.9,255.0 864.8,255.1 865.6,255.1 866.4,254.9 867.3,255.1 868.1,255.1 869.0,254.9 869.8,255.0 870.6,255.0 871.5,254.9 872.3,255.0 873.2,254.9 874.0,255.0 875.2,254.4 875.8,253.6 876.4,254.7 877.4,254.9 878.2,254.9 879.0,255.0 879.9,255.0 880.7,254.9 881.6,254.9 882.4,254.9 883.2,255.1 884.1,255.0 884.9,255.1 885.8,254.9 886.6,255.1 887.4,254.9 888.3,255.0 889.1,255.0 890.0,255.0 890.8,255.1 891.6,255.0 892.5,255.0 893.3,255.1 894.2,254.9 895.0,255.0 895.8,254.9 897.2,254.3 897.8,253.3 898.4,254.7 899.2,255.1 900.0,255.0 900.9,255.0 901.7,255.0 902.6,255.0 903.4,254.9 904.2,255.0 905.1,254.9 905.9,255.1 906.8,255.0 907.6,255.0 908.4,255.1 909.3,255.0 910.1,255.0 911.0,255.0 911.8,254.9 912.6,254.9 913.5,254.9 914.3,255.0 915.2,255.0 916.0,255.0 916.8,255.0 917.7,254.9 918.5,254.8 919.3,254.3 919.9,253.3 920.5,254.7 921.0,254.8 921.9,254.9 922.7,254.9 923.6,255.0 924.4,254.9 925.2,255.0 926.1,255.0 926.9,254.9 927.8,255.0 928.6,255.0 929.4,254.9 930.3,255.1 931.1,254.9 932.0,254.9 932.8,254.9 933.6,255.0 934.5,255.1 935.3,255.0 936.2,255.0 937.0,254.9 937.8,254.9 938.7,255.0 939.5,255.0 940.9,254.5 941.5,253.8 942.1,254.8 942.9,255.1 943.7,255.0 944.6,254.9 944.6,255.0" fill="none" stroke="#e8e8e8" stroke-width="1.02" stroke-linejoin="round"/>
<path d="M38.6 216 V252 M61 217 V252" stroke="#dede86" stroke-width="1.500" fill="none"/><path d="M38.600 194.400 V216" stroke="#f0f0c8" stroke-width=".9" fill="none"/><path d="M61 205.600 V217" stroke="#caca6a" stroke-width=".9" fill="none"/>
<rect x="34.8" y="492.0" width="7.4" height="6.9" rx=".4" fill="#141300" stroke="#b8b226" stroke-width=".8"/><text x="38.5" y="498.0" font-size="7.6" font-family="Liberation Sans, sans-serif" fill="#b8b226" text-anchor="middle">A</text>
<rect x="34.8" y="499.5" width="7.4" height="6.9" rx=".4" fill="#141300" stroke="#b8b226" stroke-width=".8"/><path d="M36.3 500.8 l4.4 4.300 M40.7 500.8 l-4.400 4.300" stroke="#b8b226" stroke-width=".9"/>
<rect x="57.2" y="492.0" width="7.4" height="6.9" rx=".4" fill="#141300" stroke="#b8b226" stroke-width=".8"/><path d="M58.7 493.3 l4.4 4.300 M63.1 493.3 l-4.400 4.300" stroke="#b8b226" stroke-width=".9"/>
<rect x="57.2" y="499.5" width="7.4" height="6.9" rx=".4" fill="#141300" stroke="#b8b226" stroke-width=".8"/><text x="60.9" y="505.5" font-size="7.6" font-family="Liberation Sans, sans-serif" fill="#b8b226" text-anchor="middle">B</text>
<text x="3.400" y="259.300" font-size="11.200" font-weight="bold" font-family="Liberation Sans, sans-serif" fill="#f4f4f4">1</text>
<path d="M10 254.700 h2.200 v-1.900 l3.100 2.800 -3.100 2.800 v-1.900 h-2.200z" fill="#f4f4f4"/>
</svg>
</div>
<div id="vs" class="abs"><div class="abs" style="right:0;top:0;width:1.7px;height:100%;background:#f7f7f7"></div>
<div class="abs" style="left:4.200px;top:5.400px;width:0;height:0;border-left:2.200px solid transparent;border-right:2.200px solid transparent;border-bottom:2.600px solid #585858"></div>
<div class="abs" style="left:4.4px;top:499.600px;width:0;height:0;border-left:2px solid transparent;border-right:2px solid transparent;border-top:2.400px solid #606060"></div>
<div class="abs" style="left:1.400px;top:253.200px;width:9.900px;height:12px;box-sizing:border-box;border:.7px solid #b4b4b4;border-radius:1.500px;background:linear-gradient(to right,#f6f6f6 0,#ececec 45%,#d0d0d0 55%,#c6c6c6 100%)"></div></div>
<div id="hs" class="abs">
<div class="abs" style="left:4.600px;top:3.600px;width:0;height:0;border-top:2.200px solid transparent;border-bottom:2.200px solid transparent;border-right:2.600px solid #505050"></div>
<div class="abs" style="left:937.400px;top:3.800px;width:0;height:0;border-top:2.200px solid transparent;border-bottom:2.200px solid transparent;border-left:2.600px solid #505050"></div>
<div class="abs" style="left:13.300px;top:.6px;width:622.800px;height:10.300px;box-sizing:border-box;border:.7px solid #a4a4a4;border-top-color:#b8b8b8;border-bottom-color:#9c9c9c;border-radius:1.200px;background:linear-gradient(to bottom,#f6f6f6 0,#ececec 42%,#d6d6da 55%,#c2c2c8 100%)"></div>
<div class="abs" style="left:322px;top:4px;width:.7px;height:4.400px;background:#8a8a8a;box-shadow:1.700px 0 0 #8a8a8a,3.400px 0 0 #8a8a8a"></div>
</div>
<div id="bot" class="abs"></div>
</div></body></html>
